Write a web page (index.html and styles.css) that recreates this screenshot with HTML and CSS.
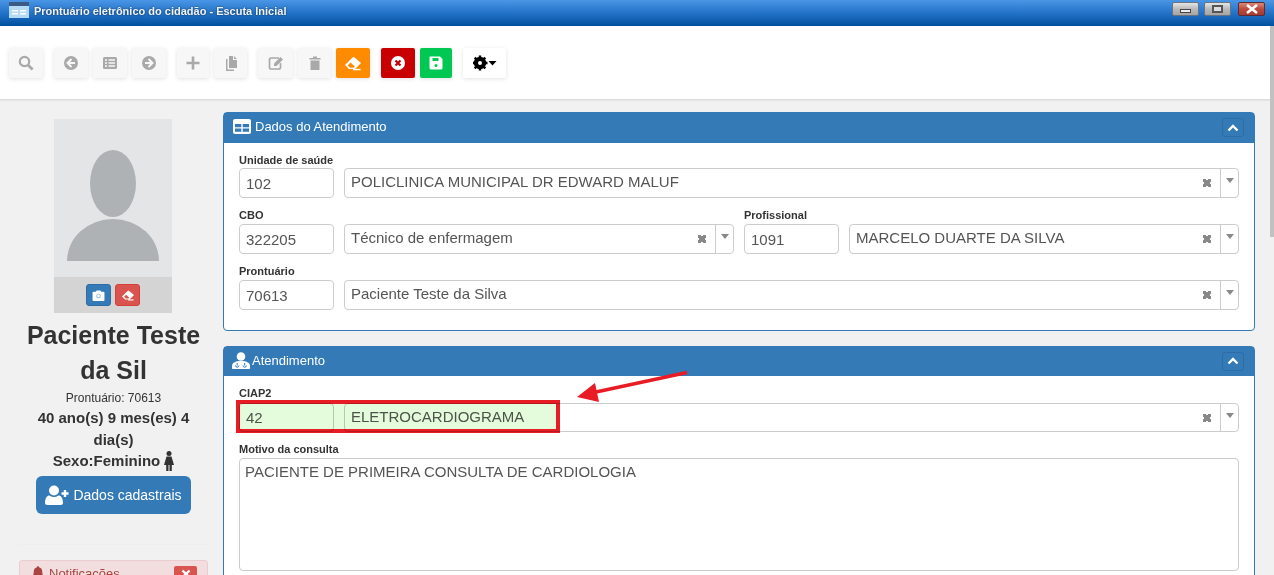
FILE: index.html
```html
<!DOCTYPE html>
<html lang="pt-BR">
<head>
  <meta charset="UTF-8">
  <title>Prontuário eletrônico do cidadão - Escuta Inicial</title>
  <link rel="stylesheet" href="styles.css">
</head>
<body>
  <div class="app">
    <header class="titlebar">
      <svg class="app-icon" viewBox="0 0 20 16"><rect width="20" height="4" fill="#3c5a86"/><rect y="4" width="20" height="12" fill="#b5daf5"/><rect x="3" y="8" width="6" height="1.5" fill="#fff"/><rect x="3" y="11" width="6" height="1.5" fill="#fff"/><rect x="11" y="8" width="6" height="1.5" fill="#fff"/><rect x="11" y="11" width="6" height="1.5" fill="#fff"/></svg>
      <span class="titlebar-text">Prontuário eletrônico do cidadão - Escuta Inicial</span>
      <div class="win-buttons">
        <div class="win-btn"><span class="win-min"></span></div>
        <div class="win-btn"><span class="win-max"></span></div>
        <div class="win-btn win-close"><svg viewBox="0 0 12 10" width="12" height="10"><path d="M1 1l10 8M11 1L1 9" stroke="#fff" stroke-width="2.600"/></svg></div>
      </div>
    </header>

    <div class="toolbar">
      <div class="tool w34 mr11"><svg viewBox="0 0 16 16"><circle cx="6.5" cy="6.5" r="4.7" fill="none" stroke="#a9a9a9" stroke-width="2.2"/><path d="M10 10l4.6 4.6" stroke="#a9a9a9" stroke-width="2.8"/></svg></div>
      <div class="tool w34 mr5"><svg viewBox="0 0 16 16"><circle cx="8" cy="8" r="7" fill="#a9a9a9"/><path d="M8.5 4L4.5 8l4 4M5 8h7" fill="none" stroke="#f7f7f7" stroke-width="2"/></svg></div>
      <div class="tool w34 mr5"><svg viewBox="0 0 16 16"><rect x="1" y="2" width="14" height="12" rx="1.5" fill="#a9a9a9"/><path d="M3 5h2M6.500 5H13M3 8h2M6.500 8H13M3 11h2M6.500 11H13" stroke="#f7f7f7" stroke-width="1.400"/></svg></div>
      <div class="tool w34 mr11"><svg viewBox="0 0 16 16"><circle cx="8" cy="8" r="7" fill="#a9a9a9"/><path d="M7.500 4l4 4-4 4M11 8H4" fill="none" stroke="#f7f7f7" stroke-width="2"/></svg></div>
      <div class="tool w32 mr5"><svg viewBox="0 0 16 16"><path d="M8 1.500v13M1.500 8h13" stroke="#a9a9a9" stroke-width="2.600"/></svg></div>
      <div class="tool w33 mr11"><svg viewBox="0 0 16 16"><path d="M6 1h4v4h4v8H6zM11 1l3 3h-3z" fill="#a9a9a9"/><path d="M4.500 4v10.500H11V16H3V4z" fill="#a9a9a9"/></svg></div>
      <div class="tool w35 mr5"><svg viewBox="0 0 16 16"><path d="M11 3H3a1.500 1.500 0 0 0-1.500 1.500v8A1.500 1.500 0 0 0 3 14h8a1.500 1.500 0 0 0 1.500-1.500V8" fill="none" stroke="#a9a9a9" stroke-width="1.700"/><path d="M6 8.500L12.500 2 15 4.500 8.500 11H6z" fill="#a9a9a9"/></svg></div>
      <div class="tool w33 mr5"><svg viewBox="0 0 16 16"><path d="M2.500 3h11v1.500h-11zM6 1.500h4V3H6zM3.500 5.500h9V15h-9z" fill="#a9a9a9"/></svg></div>
      <div class="tool w34 mr11 tool-orange"><svg class="eraser" viewBox="0 0 18 16"><path d="M1 10l7.500-7.500a1.500 1.500 0 0 1 2 0L17 8l-6 6H5z" fill="#fff"/><path d="M3.800 10.300l2.700-2.700 4.300 4-1.400 1.200H6z" fill="#ff8c00"/><path d="M9 13.800h7.500v1.500H9z" fill="#fff"/></svg></div>
      <div class="tool w34 mr5 tool-red"><svg viewBox="0 0 16 16"><circle cx="8" cy="8" r="7" fill="#fff"/><path d="M5.500 5.500l5 5M10.500 5.500l-5 5" stroke="#c90000" stroke-width="2.200"/></svg></div>
      <div class="tool w32 mr11 tool-green"><svg viewBox="0 0 16 16"><path d="M2 1.500h10L14.500 4v9a1.500 1.500 0 0 1-1.500 1.500H3A1.500 1.500 0 0 1 1.500 13V2z" fill="#fff"/><rect x="4.500" y="3" width="6" height="3" fill="#00c853"/><circle cx="8" cy="10.500" r="1.500" fill="#00c853"/></svg></div>
      <div class="tool w43 tool-white"><svg class="gear" viewBox="0 0 24 16" width="24" height="16"><circle cx="7" cy="8" r="4.600" fill="none" stroke="#000" stroke-width="3.200"/><path d="M7 0.500v15M-0.500 8h15M1.700 2.700l10.600 10.600M12.300 2.700L1.700 13.300" stroke="#000" stroke-width="2.400"/><circle cx="7" cy="8" r="2" fill="#fff"/><path d="M15.500 6h8l-4 4.500z" fill="#000"/></svg></div>
    </div>

    <div class="content">
      <aside class="sidebar">
        <div class="photo">
          <div class="photo-img">
            <svg viewBox="0 0 118 158" width="118" height="158"><ellipse cx="59" cy="64.500" rx="23" ry="33.500" fill="#aeb2b5"/><path d="M13 142a46 42 0 0 1 92 0z" fill="#aeb2b5"/></svg>
          </div>
          <div class="photo-actions">
            <div class="btn-mini btn-mini-blue"><svg viewBox="0 0 14 12" width="13" height="11"><path d="M1.500 2H4l1-1.500h4L10 2h2.500a1 1 0 0 1 1 1v8a1 1 0 0 1-1 1h-11a1 1 0 0 1-1-1V3a1 1 0 0 1 1-1z" fill="#fff"/><circle cx="7" cy="6.500" r="2.500" fill="#8fb8dc"/><circle cx="7" cy="6.500" r="1.500" fill="#fff"/></svg></div>
            <div class="btn-mini btn-mini-red"><svg viewBox="0 0 18 16" width="14" height="12"><path d="M1 10l7.500-7.500a1.500 1.500 0 0 1 2 0L17 8l-6 6H5z" fill="#fff"/><path d="M3.800 10.300l2.700-2.700 4.300 4-1.400 1.200H6z" fill="#d9534f"/><path d="M9 13.800h7.500v1.500H9z" fill="#fff"/></svg></div>
          </div>
        </div>
        <h2 class="patient-name">Paciente Teste da Sil</h2>
        <div class="patient-record">Prontuário: 70613</div>
        <div class="patient-info">40 ano(s) 9 mes(es) 4 dia(s)</div>
        <div class="patient-info patient-sex">Sexo:Feminino
          <svg viewBox="0 0 10 20" width="10" height="20"><circle cx="5" cy="2.500" r="2.500" fill="#333"/><path d="M2.500 5.500h5L10 14H7.800v6H5.500v-6h-1v6H2.200v-6H0z" fill="#333"/></svg>
        </div>
        <div class="btn-register">
          <svg viewBox="0 0 24 20" width="24" height="20"><circle cx="9" cy="5.500" r="5" fill="#fff"/><path d="M0 18c0-6 3-7.500 4.500-7.500 1.500 1 3 1.500 4.500 1.500s3-.5 4.500-1.500C16 10.500 18 13 18 18c0 1-1 2-2 2H2c-1 0-2-1-2-2z" fill="#fff"/><path d="M20 5v7M16.500 8.500h7" stroke="#fff" stroke-width="2.400"/></svg>
          Dados cadastrais
        </div>
        <hr class="side-rule">
        <div class="notice">
          <svg viewBox="0 0 14 16" width="12" height="14"><path d="M7 0a1.500 1.500 0 0 1 1.500 1.500C11 2 12 4 12 7c0 3 1 4 2 5v1H0v-1c1-1 2-2 2-5 0-3 1-5 3.500-5.500A1.500 1.500 0 0 1 7 0z" fill="#a94442"/></svg>
          <span>Notificações</span>
          <div class="notice-close"><svg viewBox="0 0 10 10" width="10" height="10"><path d="M1.500 1.500l7 7M8.500 1.500l-7 7" stroke="#fff" stroke-width="2.400"/></svg></div>
        </div>
      </aside>

      <main class="main">
        <section class="panel panel-data">
          <div class="panel-head">
            <svg viewBox="0 0 18 15" width="18" height="15"><rect width="18" height="15" rx="2" fill="#fff"/><path d="M2 5h6.300v3.200H2zM9.700 5H16v3.200H9.700zM2 9.600h6.300v3.200H2zM9.700 9.600H16v3.200H9.700z" fill="#337ab7"/></svg>
            <span>Dados do Atendimento</span>
            <div class="collapse"><svg viewBox="0 0 12 8" width="12" height="8"><path d="M1.500 6.500L6 2l4.500 4.500" fill="none" stroke="#fff" stroke-width="2.400"/></svg></div>
          </div>
          <div class="panel-body">
            <label class="field-label">Unidade de saúde</label>
            <div class="row">
              <div class="input code">102</div>
              <div class="select"><span>POLICLINICA MUNICIPAL DR EDWARD MALUF</span><i class="clear"></i><i class="caret"></i></div>
            </div>
            <div class="row-labels">
              <label class="field-label">CBO</label>
              <label class="field-label">Profissional</label>
            </div>
            <div class="row">
              <div class="input code">322205</div>
              <div class="select"><span>Técnico de enfermagem</span><i class="clear"></i><i class="caret"></i></div>
              <div class="input code">1091</div>
              <div class="select"><span>MARCELO DUARTE DA SILVA</span><i class="clear"></i><i class="caret"></i></div>
            </div>
            <label class="field-label">Prontuário</label>
            <div class="row">
              <div class="input code">70613</div>
              <div class="select"><span>Paciente Teste da Silva</span><i class="clear"></i><i class="caret"></i></div>
            </div>
          </div>
        </section>

        <section class="panel panel-visit">
          <div class="panel-head">
            <svg viewBox="0 0 18 17" width="18" height="17"><circle cx="9" cy="4.500" r="4.300" fill="#fff"/><path d="M1 17c-.6 0-1-.4-1-1v-2c0-3 3-5 9-5s9 2 9 5v2c0 .6-.4 1-1 1z" fill="#fff"/><path d="M3.500 13.500a1.700 1.700 0 1 0 3.400 0M11 13.500a1.700 1.700 0 1 0 3.400 0M5.200 13.500V11M12.700 13.500V11" fill="none" stroke="#337ab7"/></svg>
            <span>Atendimento</span>
            <div class="collapse"><svg viewBox="0 0 12 8" width="12" height="8"><path d="M1.500 6.500L6 2l4.500 4.500" fill="none" stroke="#fff" stroke-width="2.400"/></svg></div>
          </div>
          <div class="panel-body">
            <label class="field-label">CIAP2</label>
            <div class="row">
              <div class="input code">42</div>
              <div class="select"><span>ELETROCARDIOGRAMA</span><i class="clear"></i><i class="caret"></i></div>
            </div>
            <label class="field-label">Motivo da consulta</label>
            <div class="textarea">PACIENTE DE PRIMEIRA CONSULTA DE CARDIOLOGIA</div>
          </div>
        </section>
      </main>
    </div>

    <div class="scroll-thumb"></div>
    <div class="mark-box"></div>
    <svg class="mark-arrow" viewBox="0 0 125 45" width="125" height="45"><path d="M117 7.500L26 27" stroke="#e81c24" stroke-width="3.600"/><path d="M7 32L25 18l4 19z" fill="#e81c24"/></svg>
  </div>
</body>
</html>
```

FILE: styles.css
```css
* {
  box-sizing: border-box;
}

html, body {
  margin: 0;
  height: 100%;
  overflow: hidden;
}

body {
  font-family: "Liberation Sans", Arial, sans-serif;
  font-size: 14px;
  color: #333;
}

.app {
  position: relative;
  display: flex;
  flex-direction: column;
  height: 100vh;
  overflow: hidden;
  background: #f1f1f1;
}

/* barra de titulo */
.titlebar {
  display: flex;
  align-items: center;
  flex: none;
  height: 26px;
  padding: 0 9px;
  background: linear-gradient(#4a96e6, #1f6fc4 55%, #02509f);
}

.app-icon {
  width: 20px;
  height: 16px;
  margin: 0 5px 6px 0;
}

.titlebar-text {
  margin-bottom: 4px;
  font-size: 11px;
  font-weight: 700;
  color: #fff;
  opacity: .92;
  text-shadow: 0 0 2px #123;
}

.win-buttons {
  display: flex;
  gap: 5px;
  margin-left: auto;
  padding-bottom: 8px;
}

.win-btn {
  display: flex;
  align-items: center;
  justify-content: center;
  width: 27px;
  height: 14px;
  border: 1px solid #6a7480;
  border-radius: 2px;
  background: linear-gradient(#e6e6e6, #b9b9b9 50%, #a5a5a5);
}

.win-min {
  width: 11px;
  height: 4px;
  margin-top: 3px;
  border: 1px solid #444;
  background: #eee;
}

.win-max {
  width: 11px;
  height: 8px;
  border: 2px solid #555;
  background: #ddd;
}

.win-close {
  margin-left: 2px;
  border-color: #5b2a33;
  background: linear-gradient(#dc8a78, #bb4a3a 50%, #a83a32);
}

/* barra de ferramentas */
.toolbar {
  display: flex;
  align-items: center;
  flex: none;
  height: 74px;
  padding: 1px 0 0 9px;
  background: #fff;
  border-bottom: 1px solid #dcdcdc;
  box-shadow: 0 1px 1px #e6e6e6;
}

.tool {
  display: flex;
  align-items: center;
  justify-content: center;
  height: 30px;
  border-radius: 2px;
  background: #f7f7f7;
  box-shadow: 0 1px 4px rgba(0, 0, 0, .12);
}

.tool svg {
  width: 16px;
  height: 16px;
}

.tool .gear {
  width: 24px;
  height: 16px;
}

.tool .eraser {
  width: 18px;
  height: 16px;
}

.w32 { width: 32px; }
.w33 { width: 33px; }
.w34 { width: 34px; }
.w35 { width: 35px; }
.w43 { width: 43px; }
.mr5 { margin-right: 5px; }
.mr11 { margin-right: 11px; }

.tool-orange { background: #ff8c00; }
.tool-red { background: #c90000; }
.tool-green { background: #00c853; }
.tool-white { background: #fff; }

.content {
  display: flex;
  flex: 1;
  min-height: 0;
}

/* coluna do paciente */
.sidebar {
  flex: none;
  width: 223px;
  padding: 19px 15px 0 19px;
  text-align: center;
}

.photo {
  width: 118px;
  margin: 0 0 0 35px;
}

.photo-img {
  height: 158px;
  background: #e4e5e7;
}

.photo-img svg {
  display: block;
}

.photo-actions {
  display: flex;
  justify-content: center;
  gap: 4px;
  height: 36px;
  padding-top: 7px;
  background: #d4d4d4;
}

.btn-mini {
  display: flex;
  align-items: center;
  justify-content: center;
  width: 25px;
  height: 22px;
  border-radius: 3px;
}

.btn-mini-blue {
  background: #337ab7;
  border: 1px solid #2e6da4;
}

.btn-mini-red {
  background: #d9534f;
  border: 1px solid #d43f3a;
}

.patient-name {
  margin: 5px 0 0;
  font-size: 25px;
  line-height: 35px;
  font-weight: 700;
}

.patient-record {
  font-size: 12px;
  line-height: 20px;
}

.patient-record + .patient-info {
  margin-top: -1px;
}

.patient-info {
  font-size: 15px;
  line-height: 21.500px;
  font-weight: 700;
}

.patient-sex {
  display: flex;
  align-items: center;
  justify-content: center;
  gap: 4px;
}

.btn-register {
  display: flex;
  align-items: center;
  justify-content: center;
  gap: 4px;
  width: 155px;
  height: 38px;
  margin: 4.500px 0 0 17px;
  border-radius: 6px;
  background: #337ab7;
  color: #fff;
  font-size: 14px;
}

.side-rule {
  height: 1px;
  margin: 30px 0 15px;
  border: 0;
  background: #eee;
}

.notice {
  display: flex;
  align-items: flex-start;
  gap: 5px;
  height: 40px;
  padding: 5px 10px 0 12px;
  border: 1px solid #ebccd1;
  border-radius: 3px;
  background: #f2dede;
  color: #a94442;
  font-size: 13px;
  text-align: left;
}

.notice-close {
  display: flex;
  align-items: center;
  justify-content: center;
  width: 23px;
  height: 16px;
  margin-left: auto;
  border-radius: 2px;
  background: #d9534f;
}

/* paineis */
.main {
  flex: none;
  width: 1032px;
  padding-top: 12px;
}

.panel {
  border: 1px solid #337ab7;
  border-radius: 4px;
  background: #fff;
}

.panel-data {
  height: 219px;
  margin-bottom: 15px;
}

.panel-visit {
  height: 300px;
}

.panel-head {
  display: flex;
  align-items: center;
  gap: 4px;
  height: 30px;
  padding: 0 10px 4px 9px;
  background: #337ab7;
  color: #fff;
  font-size: 13px;
}

.panel-head .collapse {
  margin-top: 3px;
}

.panel-visit .panel-head {
  height: 29px;
  gap: 2px;
  padding: 0 10px 2px 8px;
}

.panel-visit .panel-head .collapse {
  margin-top: 1px;
}

.collapse {
  display: flex;
  align-items: center;
  justify-content: center;
  width: 22px;
  height: 19px;
  margin-left: auto;
  border: 1px solid #2e6da4;
  border-radius: 3px;
}

.panel-body {
  padding: 10px 15px 0;
}

.field-label {
  display: block;
  height: 15px;
  font-size: 11px;
  line-height: 14px;
  font-weight: 700;
}

.row + .field-label {
  margin-bottom: 1px;
}

.row-labels {
  display: flex;
  margin-bottom: 1px;
}

.row-labels .field-label:first-child {
  width: 505px;
}

.row {
  display: flex;
  gap: 10px;
  margin-bottom: 10px;
}

.input,
.select {
  display: flex;
  align-items: center;
  height: 30px;
  padding-left: 6px;
  border: 1px solid #ccc;
  border-radius: 4px;
  background: #fff;
  color: #555;
  font-size: 15px;
}

.input.code {
  flex: none;
  width: 95px;
}

.select {
  flex: 1;
  padding-bottom: 3px;
}

.clear {
  width: 8px;
  height: 8px;
  margin: 3px 9px 0 auto;
  background: linear-gradient(45deg, transparent 33%, #888 33%, #888 67%, transparent 67%),
    linear-gradient(-45deg, transparent 33%, #888 33%, #888 67%, transparent 67%);
}

.caret {
  display: flex;
  align-items: center;
  justify-content: center;
  align-self: stretch;
  width: 18px;
  margin-bottom: -3px;
  padding-bottom: 5px;
  border-left: 1px solid #ccc;
}

.caret::after {
  content: "";
  border: 4px solid transparent;
  border-top: 5px solid #888;
  border-bottom: 0;
}

.textarea {
  height: 113px;
  padding: 4px 5px;
  border: 1px solid #ccc;
  border-radius: 4px;
  color: #555;
  font-size: 15px;
}

.panel-visit .panel-body > .field-label:first-child {
  margin-bottom: 2px;
}

.panel-visit .row .input,
.panel-visit .row .select {
  height: 29px;
}

/* marcas sobre a imagem */
.scroll-thumb {
  position: absolute;
  top: 26px;
  right: 0;
  width: 4px;
  height: 211px;
  background: #c1c1c1;
}

.mark-box {
  position: absolute;
  left: 236px;
  top: 400px;
  width: 324px;
  height: 33px;
  border: 4px solid #e81c24;
  background: #e4fbdc;
  mix-blend-mode: multiply;
}

.mark-arrow {
  position: absolute;
  left: 570px;
  top: 365px;
}
```
